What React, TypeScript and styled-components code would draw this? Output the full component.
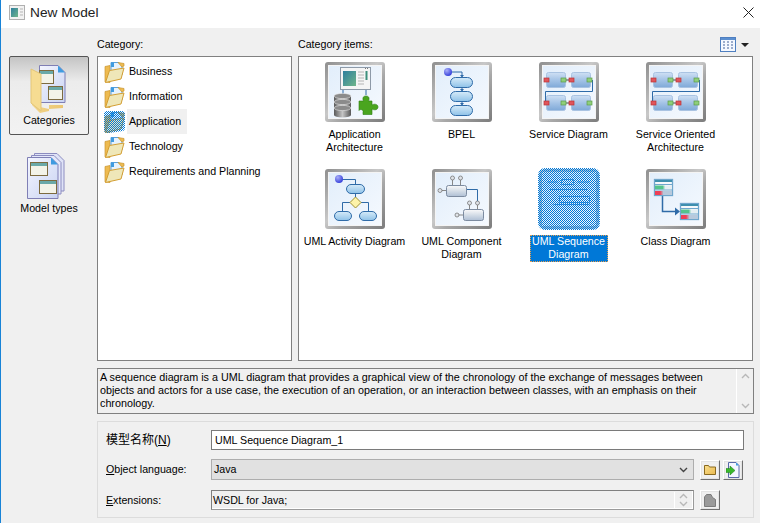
import * as React from 'react';
import styled, { createGlobalStyle } from 'styled-components';

const GlobalStyle = createGlobalStyle`
  html, body {
    margin: 0;
    padding: 0;
    background: #f0f0f0;
  }
  * {
    box-sizing: border-box;
  }
`;

const Window = styled.div`
  width: 760px;
  height: 523px;
  overflow: hidden;
  display: flex;
  flex-direction: column;
  background: #f0f0f0;
  border-left: 1px solid #1883d7;
  font-family: 'Liberation Sans', Arial, 'Noto Sans CJK SC', sans-serif;
  font-size: 10.66px;
  line-height: 13px;
  color: #000;
`;

const TitleBar = styled.div`
  height: 28px;
  flex: none;
  background: #fff;
  display: flex;
  align-items: center;
  padding: 0 6px 3px 8px;
`;

const TitleText = styled.div`
  margin-left: 5px;
  flex: 1;
  font-size: 13.7px;
  color: #222;
`;

const Body = styled.div`
  flex: 1;
  display: flex;
  min-height: 0;
`;

const Sidebar = styled.div`
  width: 96px;
  flex: none;
  padding: 28px 0 0 8px;
  display: flex;
  flex-direction: column;
  gap: 10px;
`;

const SideButton = styled.div<{ $active?: boolean }>`
  width: 80px;
  height: 79px;
  display: flex;
  flex-direction: column;
  align-items: center;
  padding-top: ${(p) => (p.$active ? '8px' : '7px')};
  gap: 1px;
  border-radius: 2px;
  border: 1px solid ${(p) => (p.$active ? '#555' : 'transparent')};
  background: ${(p) => (p.$active ? 'linear-gradient(#c4c4c4, #ececec 32%, #f2f2f2)' : 'transparent')};
`;

const Main = styled.div`
  flex: 1;
  display: flex;
  flex-direction: column;
  padding-right: 6px;
`;

const Columns = styled.div`
  display: grid;
  grid-template-columns: 195px 455px;
  column-gap: 6px;
`;

const PaneTitle = styled.div`
  height: 28px;
  display: flex;
  align-items: flex-end;
  justify-content: space-between;
  padding: 0 4px 5px 0;
`;

const ViewSwitch = styled.div`
  display: flex;
  align-items: center;
  gap: 5px;
  margin-bottom: -1px;
`;

const Caret = styled.div`
  width: 0;
  height: 0;
  border-left: 4px solid transparent;
  border-right: 4px solid transparent;
  border-top: 4px solid #222;
`;

const ListBox = styled.div`
  height: 305px;
  background: #fff;
  border: 1px solid #808080;
  padding-top: 2px;
`;

const ListRow = styled.div`
  height: 25px;
  display: flex;
  align-items: center;
  padding-left: 6px;
`;

const ListLabel = styled.div<{ $selected?: boolean }>`
  height: 25px;
  display: flex;
  align-items: center;
  margin-left: 2px;
  padding: 0 1px 0 2px;
  min-width: 60px;
  background: ${(p) => (p.$selected ? '#f0f0f0' : 'transparent')};
`;

const ItemsBox = styled.div`
  height: 305px;
  background: #fff;
  border: 1px solid #808080;
  padding: 5px 0 0 2px;
  display: grid;
  grid-template-columns: repeat(4, 107px);
  grid-auto-rows: 107px;
`;

const ItemCell = styled.div`
  display: flex;
  flex-direction: column;
  align-items: center;
`;

const Tile = styled.div<{ $selected?: boolean }>`
  position: relative;
  width: 60px;
  height: 60px;
  padding: 4px;
  border-radius: ${(p) => (p.$selected ? '6px' : '3px')};
  background: ${(p) =>
    p.$selected ? '#a9c4dc' : 'linear-gradient(135deg, #8f8f8f, #c8c8c8 45%, #a8a8a8 60%, #7c7c7c)'};
  flex: none;
`;

const TileFace = styled.div`
  width: 52px;
  height: 52px;
  background: linear-gradient(135deg, #e2eefb, #f5f9fe);
  box-shadow: 0 0 0 1px #f4f4f4;
`;

const SelectedOverlay = styled.svg`
  position: absolute;
  left: -1px;
  top: -1px;
  display: block;
`;

const ItemLabel = styled.div<{ $selected?: boolean }>`
  margin-top: 6px;
  text-align: center;
  width: ${(p) => (p.$selected ? '78px' : 'auto')};
  max-width: 107px;
  padding: 0 1px 1px;
  white-space: pre-line;
  color: ${(p) => (p.$selected ? '#fff' : '#000')};
  background: ${(p) => (p.$selected ? '#0078d7' : 'transparent')};
  outline: ${(p) => (p.$selected ? '1px dotted #e8a050' : 'none')};
  outline-offset: -1px;
`;

const Description = styled.div`
  margin-top: 7px;
  height: 46px;
  display: flex;
  border: 1px solid #808080;
`;

const DescriptionText = styled.div`
  flex: 1;
  padding: 2px 30px 0 2px;
  font-size: 10.78px;
`;

const DescriptionScroll = styled.div`
  width: 17px;
  flex: none;
  border-left: 1px solid #fff;
  display: flex;
  flex-direction: column;
  justify-content: space-between;
  align-items: center;
  padding: 4px 0;
`;

const Group = styled.div`
  margin-top: 7px;
  height: 97px;
  border: 1px solid #dcdcdc;
  padding: 8px 9px 0 8px;
  display: flex;
  flex-direction: column;
`;

const FormRow = styled.div<{ $gap: number }>`
  display: flex;
  align-items: center;
  margin-bottom: ${(p) => p.$gap}px;
`;

const FormLabel = styled.div<{ $large?: boolean }>`
  width: 105px;
  flex: none;
  font-size: ${(p) => (p.$large ? '12px' : '10.66px')};
`;

const NameInput = styled.div`
  flex: 1;
  height: 20px;
  background: #fff;
  border: 1px solid #7a7a7a;
  padding: 0 3px;
  display: flex;
  align-items: center;
`;

const SelectBox = styled.div`
  width: 483px;
  height: 21px;
  flex: none;
  background: #e1e1e1;
  border: 1px solid #adadad;
  display: flex;
  align-items: center;
  justify-content: space-between;
  padding: 0 5px 0 2px;
`;

const ExtensionBox = styled.div`
  width: 483px;
  height: 20px;
  flex: none;
  display: flex;
  align-items: center;
  justify-content: space-between;
  border: 1px solid;
  border-color: #808080 #9a9a9a #9a9a9a #808080;
  box-shadow: inset -1px -1px 0 #fff;
  padding: 0 2px 0 1px;
`;

const ExtensionSpin = styled.div`
  width: 17px;
  height: 16px;
  border-left: 1px solid #fff;
  display: flex;
  flex-direction: column;
  align-items: center;
  justify-content: center;
  gap: 2px;
`;

const ToolButton = styled.div`
  width: 20px;
  height: 20px;
  flex: none;
  display: flex;
  align-items: center;
  justify-content: center;
  background: #f0f0f0;
  border: 1px solid;
  border-color: #fff #707070 #707070 #fff;
  box-shadow: inset 0 0 0 1px #e4e4e4;
`;

const ToolButtons = styled.div`
  display: flex;
  gap: 3px;
  margin-left: 6px;
`;

const Defs = styled.svg`
  display: block;
  width: 0;
  height: 0;
`;

const IconSvg = styled.svg`
  display: block;
  flex: none;
`;

const SharedGradients = () => (
  <Defs aria-hidden="true">
    <defs>
      <linearGradient id="pill" x1="0" y1="0" x2="0" y2="1">
        <stop offset="0" stopColor="#d6ebf9" />
        <stop offset="1" stopColor="#8fc2e8" />
      </linearGradient>
      <linearGradient id="svc" x1="0" y1="0" x2="0" y2="1">
        <stop offset="0" stopColor="#cfe0f4" />
        <stop offset="0.5" stopColor="#a4c3e6" />
        <stop offset="1" stopColor="#7fa9d8" />
      </linearGradient>
      <linearGradient id="comp" x1="0" y1="0" x2="0" y2="1">
        <stop offset="0" stopColor="#fafafa" />
        <stop offset="1" stopColor="#aebfd4" />
      </linearGradient>
      <linearGradient id="folder" x1="0" y1="0" x2="1" y2="1">
        <stop offset="0" stopColor="#fbe08f" />
        <stop offset="1" stopColor="#e9b94f" />
      </linearGradient>
      <linearGradient id="chart" x1="0" y1="0" x2="1" y2="1">
        <stop offset="0" stopColor="#2e7f9e" />
        <stop offset="1" stopColor="#6fb58a" />
      </linearGradient>
      <linearGradient id="page" x1="0" y1="0" x2="1" y2="1">
        <stop offset="0" stopColor="#f4f6ff" />
        <stop offset="1" stopColor="#c9d3f2" />
      </linearGradient>
      <linearGradient id="disk" x1="0" y1="0" x2="1" y2="0">
        <stop offset="0" stopColor="#5a5a5a" />
        <stop offset="0.5" stopColor="#c4c4c4" />
        <stop offset="1" stopColor="#585858" />
      </linearGradient>
      <linearGradient id="rowGreen" x1="0" y1="0" x2="1" y2="0">
        <stop offset="0.45" stopColor="#52c48c" />
        <stop offset="0.6" stopColor="#e4eef2" />
      </linearGradient>
      <linearGradient id="rowRed" x1="0" y1="0" x2="1" y2="0">
        <stop offset="0.3" stopColor="#ee3f56" />
        <stop offset="0.5" stopColor="#b7c9dc" />
      </linearGradient>
      <radialGradient id="ball" cx="0.35" cy="0.3" r="0.8">
        <stop offset="0" stopColor="#a9aef8" />
        <stop offset="1" stopColor="#2a35d8" />
      </radialGradient>
      <pattern id="dither" width="2" height="2" patternUnits="userSpaceOnUse">
        <rect width="1" height="1" fill="#0078d7" />
        <rect x="1" y="1" width="1" height="1" fill="#0078d7" />
      </pattern>
    </defs>
  </Defs>
);

const Face = ({ children }: { children: React.ReactNode }) => (
  <TileFace>
    <IconSvg width="52" height="52" viewBox="0 0 52 52">
      {children}
    </IconSvg>
  </TileFace>
);

const LINE = '#2f6ba8';

const AppArchIcon = () => (
  <Face>
    <path d="M14 23v6M37 23v6" stroke={LINE} fill="none" />
    <rect x="11.5" y="1.5" width="30" height="22" fill="#f5f5f5" stroke="#8e9aa8" />
    <rect x="14" y="5" width="13" height="15" fill="url(#chart)" />
    <path d="M29 6h6M29 9h6M29 12h6M29 15h6M29 18h6" stroke="#b5b5b5" />
    <rect x="36.5" y="5" width="2" height="9" fill="#3d8f7c" />
    <path d="M36 2.5h4" stroke="#777" strokeDasharray="1 1" />
    {[30, 36, 42].map((y) => (
      <g key={y}>
        <rect x="5" y={y} width="17" height="7" fill="url(#disk)" />
        <ellipse cx="13.5" cy={y + 7} rx="8.5" ry="2.6" fill="url(#disk)" />
        <ellipse cx="13.5" cy={y} rx="8.5" ry="2.6" fill="#8b8b8b" stroke="#e6e6e6" strokeWidth="0.6" />
      </g>
    ))}
    <path
      d="M30 35h4.500c-1-2-1-5 2.500-5s3.500 3 2.500 5H43v4c2-1.500 6-1 6 2s-4 3.500-6 2v5.500H34v-2.500c1-2-3-3.500-4-1.500z"
      fill="#4aa51f"
      stroke="#2c7d12"
      strokeWidth="0.6"
    />
  </Face>
);

const Arrow = ({ x, y }: { x: number; y: number }) => <path d={`M${x - 2} ${y - 2}h4l-2 2.500z`} fill={LINE} />;

const BpelIcon = () => (
  <Face>
    <path d="M14 6h12v5M26 21v4M26 35v4" stroke={LINE} fill="none" />
    <Arrow x={26} y={11} />
    <Arrow x={26} y={25} />
    <Arrow x={26} y={39} />
    {[11, 25, 39].map((y) => (
      <rect key={y} x="14.500" y={y + 0.5} width="22" height="10" rx="5" fill="url(#pill)" stroke={LINE} />
    ))}
    <circle cx="12" cy="6" r="4" fill="url(#ball)" />
  </Face>
);

const ServiceRow = ({ y }: { y: number }) => (
  <g>
    <rect x="3.500" y={y - 7.5} width="19" height="15" rx="2" fill="url(#svc)" stroke="#a9c3e2" />
    <rect x="28.500" y={y - 7.5} width="19" height="15" rx="2" fill="url(#svc)" stroke="#a9c3e2" />
    <path d={`M22 ${y}h5`} stroke="#444" />
    {[1, 26].map((x) => (
      <rect key={x} x={x} y={y - 2} width="5" height="4" fill="#e0555c" stroke="#b33" strokeWidth="0.7" />
    ))}
    {[18, 44].map((x) => (
      <rect key={x} x={x} y={y - 2} width="5" height="4" fill="#8fcf7a" stroke="#5b9a4a" strokeWidth="0.7" />
    ))}
  </g>
);

const ServiceIcon = () => (
  <Face>
    <path d="M49.500 14v11.500H2.500V37" stroke={LINE} fill="none" />
    <ServiceRow y={14} />
    <ServiceRow y={37} />
  </Face>
);

const ActivityIcon = () => (
  <Face>
    <path d="M10 6.500h16.500V11M26.500 21v3M21 29.500H13.500V38M32 29.500h7.500V38" stroke={LINE} fill="none" />
    <circle cx="10" cy="6" r="4" fill="url(#ball)" />
    <rect x="17.500" y="11.500" width="18" height="9" rx="4.500" fill="url(#pill)" stroke={LINE} />
    <path d="M26.500 24l5.500 5.500-5.500 5.500-5.500-5.500z" fill="#fdf3a9" stroke="#a09030" />
    <rect x="5.500" y="38.500" width="17" height="9" rx="4.500" fill="url(#pill)" stroke={LINE} />
    <rect x="30.500" y="38.500" width="17" height="9" rx="4.500" fill="url(#pill)" stroke={LINE} />
  </Face>
);

const Lollipop = ({ cx, cy, dx, dy }: { cx: number; cy: number; dx: number; dy: number }) => (
  <g>
    <path d={`M${cx} ${cy}l${dx} ${dy}`} stroke="#888" />
    <circle cx={cx} cy={cy} r="2" fill="#dfe3e8" stroke="#777" strokeWidth="0.8" />
  </g>
);

const ComponentIcon = () => (
  <Face>
    <path d="M31 16.500h10.500V29" stroke={LINE} fill="none" />
    <Lollipop cx={16.5} cy={5} dx={0} dy={7} />
    <Lollipop cx={24.5} cy={5} dx={0} dy={7} />
    <Lollipop cx={4} cy={17.5} dx={7} dy={0} />
    <rect x="10.500" y="12.500" width="20" height="11" rx="2" fill="url(#comp)" stroke="#7c8ba0" />
    <Lollipop cx={33.5} cy={30} dx={0} dy={6} />
    <Lollipop cx={41.5} cy={30} dx={0} dy={6} />
    <Lollipop cx={21} cy={42} dx={7} dy={0} />
    <rect x="27.500" y="36.500" width="20" height="11" rx="2" fill="url(#comp)" stroke="#7c8ba0" />
  </Face>
);

const ClassBox = ({ x, y }: { x: number; y: number }) => (
  <g>
    <rect x={x + 0.5} y={y + 0.5} width="18" height="16" fill="#f6f8fb" stroke="#6fa6cc" strokeWidth="1.300" />
    <rect x={x + 1} y={y + 1} width="17" height="2" fill="#3f8fae" />
    <rect x={x + 1} y={y + 6.5} width="17" height="4" fill="url(#rowGreen)" />
    <path d={`M${x + 1} ${y + 5.500}h17M${x + 1} ${y + 11}h17`} stroke="#6fa6cc" />
    <rect x={x + 1} y={y + 12} width="17" height="4" fill="url(#rowRed)" />
  </g>
);

const ClassIcon = () => (
  <Face>
    <path d="M12.500 21v17.500H26" stroke={LINE} strokeWidth="1.500" fill="none" />
    <path d="M25 34.500l5 4-5 4z" fill={LINE} />
    <ClassBox x={4} y={6} />
    <ClassBox x={30} y={30} />
  </Face>
);

const SequenceIcon = () => (
  <Face>
    <path
      d="M4.500 9h10M18.500 6.500h12v5h-12zM34.500 9h12M6.500 16.500h38M16.500 23.500h30v6h-30zM10.500 31.500h36"
      stroke="#4a9ae0"
      fill="none"
    />
  </Face>
);

const SmallFolder = ({ selected }: { selected?: boolean }) => (
  <IconSvg width="21" height="22" viewBox="0 0 21 22">
    <path d="M1 5.500l5-1V21.500l-5-0.500z" fill="#eebb50" stroke="#c99530" strokeWidth="0.7" />
    <path d="M7 1.500h8l3 3V14H7z" fill="#e6f2fd" stroke="#5aa0dc" />
    <path d="M7 1.500h3V6H7z" fill="#3f9be0" />
    <path d="M14 1.500l6 1V5l-2 1z" fill="#eebb50" stroke="#c99530" strokeWidth="0.7" />
    <path d="M1.500 21.500l4-12 14.500-2.500-3 11z" fill="#efe7b8" stroke="#d39e32" />
    {selected && <path d="M0 3q0-3 3-3h15q3 0 3 3v14q0 2-2 3l-14 2H3q-3 0-3-3z" fill="url(#dither)" />}
  </IconSvg>
);

const MiniWindow = ({ x, y, w = 14, h = 13 }: { x: number; y: number; w?: number; h?: number }) => (
  <g>
    <rect x={x + 0.5} y={y + 0.5} width={w} height={h} fill="#f3f3e8" stroke="#7d6b3f" />
    <rect x={x + 1} y={y + 1} width={w - 1} height="3" fill="#6aa9a8" />
  </g>
);

const CategoriesIcon = () => (
  <IconSvg width="40" height="48" viewBox="0 0 40 48">
    <path d="M2 4l9 5v33l9 2 14-1v-3H20v6l-9 2-8-8z" fill="url(#folder)" opacity="0.8" />
    <path d="M10.500 0.500H29l7 7V37.500H10.500z" fill="url(#page)" stroke="#7f7fb5" />
    <path d="M29 0.500l7 7h-7z" fill="#3f9be0" />
    <MiniWindow x={10} y={5} />
    <MiniWindow x={19} y={21} />
    <path d="M2 4l10 5v37l-10-8z" fill="#f6dc92" stroke="#e3c679" />
  </IconSvg>
);

const ModelTypesIcon = () => (
  <IconSvg width="44" height="48" viewBox="0 0 44 48">
    <path d="M7.500 0.500H30l7 7V38H7.500z" fill="#dfe3f7" stroke="#8c8cc0" />
    <path d="M4.500 2.500H27l7 7V41H4.500z" fill="#e4e8fa" stroke="#8c8cc0" />
    <path d="M0.500 4.500H24l7 7V45.500H0.500z" fill="url(#page)" stroke="#7f7fb5" />
    <path d="M24 4.500l7 7h-7z" fill="#3f9be0" />
    <MiniWindow x={3} y={9} w={17} />
    <MiniWindow x={12} y={27} w={17} />
  </IconSvg>
);

const TitleIcon = () => (
  <IconSvg width="16" height="15" viewBox="0 0 16 15">
    <rect x="0.500" y="0.500" width="15" height="14" fill="#f2f2f2" stroke="#b0b0b0" />
    <rect x="2" y="3" width="7" height="9" fill="url(#chart)" />
    <path d="M11 4h3M11 7h3M11 10h3" stroke="#b5b5b5" />
  </IconSvg>
);

const CloseIcon = () => (
  <IconSvg width="11" height="11" viewBox="0 0 11 11">
    <path d="M0.500 0.500l10 10M10.500 0.500l-10 10" stroke="#222" fill="none" />
  </IconSvg>
);

const TableViewIcon = () => (
  <IconSvg width="16" height="15" viewBox="0 0 16 15">
    <rect x="0.500" y="0.500" width="15" height="14" fill="#f4f8ff" stroke="#4f7fc0" />
    <rect x="1" y="1" width="14" height="2" fill="#5b8fd0" />
    <path d="M3 5h2M7 5h2M11 5h2M3 8h2M7 8h2M11 8h2M3 11h2M7 11h2M11 11h2" stroke="#44639a" />
  </IconSvg>
);

const Chevron = ({ up, color = '#b8b8b8' }: { up?: boolean; color?: string }) => (
  <IconSvg width="9" height="6" viewBox="0 0 9 6">
    <path d={up ? 'M1 5l3.500-3.500L8 5' : 'M1 1l3.500 3.500L8 1'} stroke={color} strokeWidth="1.400" fill="none" />
  </IconSvg>
);

const FolderButtonIcon = () => (
  <IconSvg width="12" height="11" viewBox="0 0 12 11">
    <path d="M0.500 1.500h4l1 1.500h6v7.500h-11z" fill="url(#folder)" stroke="#8a6a20" />
  </IconSvg>
);

const ImportButtonIcon = () => (
  <IconSvg width="14" height="16" viewBox="0 0 14 16">
    <path d="M2.500 0.500H10l3 3V15.500H2.500z" fill="#f4f6ff" stroke="#5a6aa8" />
    <path d="M10 0.500l3 3h-3z" fill="#3f9be0" />
    <path d="M0 6.500h4V4l5 4.500-5 4.500v-2.500H0z" fill="#3ab82c" stroke="#1d7d16" strokeWidth="0.5" />
  </IconSvg>
);

const ExtensionButtonIcon = () => (
  <IconSvg width="12" height="13" viewBox="0 0 12 13">
    <path d="M0.500 12.500V3l2-2.500H7l1.500 3 3 2v7z" fill="#9a9a9a" stroke="#7c7c7c" />
  </IconSvg>
);

const categories = ['Business', 'Information', 'Application', 'Technology', 'Requirements and Planning'];

const items = [
  { label: 'Application\nArchitecture', Icon: AppArchIcon },
  { label: 'BPEL', Icon: BpelIcon },
  { label: 'Service Diagram', Icon: ServiceIcon },
  { label: 'Service Oriented\nArchitecture', Icon: ServiceIcon },
  { label: 'UML Activity Diagram', Icon: ActivityIcon },
  { label: 'UML Component\nDiagram', Icon: ComponentIcon },
  { label: 'UML Sequence\nDiagram', Icon: SequenceIcon, selected: true },
  { label: 'Class Diagram', Icon: ClassIcon },
];

export default function App() {
  return (
    <Window>
      <GlobalStyle />
      <SharedGradients />
      <TitleBar>
        <TitleIcon />
        <TitleText>New Model</TitleText>
        <CloseIcon />
      </TitleBar>
      <Body>
        <Sidebar>
          <SideButton $active>
            <CategoriesIcon />
            Categories
          </SideButton>
          <SideButton>
            <ModelTypesIcon />
            Model types
          </SideButton>
        </Sidebar>
        <Main>
          <Columns>
            <PaneTitle>Category:</PaneTitle>
            <PaneTitle>
              <span>
                Category <u>i</u>tems:
              </span>
              <ViewSwitch>
                <TableViewIcon />
                <Caret />
              </ViewSwitch>
            </PaneTitle>
            <ListBox>
              {categories.map((name) => (
                <ListRow key={name}>
                  <SmallFolder selected={name === 'Application'} />
                  <ListLabel $selected={name === 'Application'}>{name}</ListLabel>
                </ListRow>
              ))}
            </ListBox>
            <ItemsBox>
              {items.map(({ label, Icon, selected }) => (
                <ItemCell key={label}>
                  <Tile $selected={selected}>
                    <Icon />
                    {selected && (
                      <SelectedOverlay width="62" height="62" viewBox="0 0 62 62">
                        <rect width="62" height="62" rx="7" fill="url(#dither)" />
                      </SelectedOverlay>
                    )}
                  </Tile>
                  <ItemLabel $selected={selected}>{label}</ItemLabel>
                </ItemCell>
              ))}
            </ItemsBox>
          </Columns>
          <Description>
            <DescriptionText>
              A sequence diagram is a UML diagram that provides a graphical view of the chronology of the exchange of
              messages between objects and actors for a use case, the execution of an operation, or an interaction
              between classes, with an emphasis on their chronology.
            </DescriptionText>
            <DescriptionScroll>
              <Chevron up />
              <Chevron />
            </DescriptionScroll>
          </Description>
          <Group>
            <FormRow $gap={9}>
              <FormLabel $large>
                模型名称(<u>N</u>)
              </FormLabel>
              <NameInput>UML Sequence Diagram_1</NameInput>
            </FormRow>
            <FormRow $gap={10}>
              <FormLabel>
                <u>O</u>bject language:
              </FormLabel>
              <SelectBox>
                Java
                <Chevron color="#444" />
              </SelectBox>
              <ToolButtons>
                <ToolButton>
                  <FolderButtonIcon />
                </ToolButton>
                <ToolButton>
                  <ImportButtonIcon />
                </ToolButton>
              </ToolButtons>
            </FormRow>
            <FormRow $gap={0}>
              <FormLabel>
                <u>E</u>xtensions:
              </FormLabel>
              <ExtensionBox>
                WSDL for Java;
                <ExtensionSpin>
                  <Chevron up />
                  <Chevron />
                </ExtensionSpin>
              </ExtensionBox>
              <ToolButtons>
                <ToolButton>
                  <ExtensionButtonIcon />
                </ToolButton>
              </ToolButtons>
            </FormRow>
          </Group>
        </Main>
      </Body>
    </Window>
  );
}
